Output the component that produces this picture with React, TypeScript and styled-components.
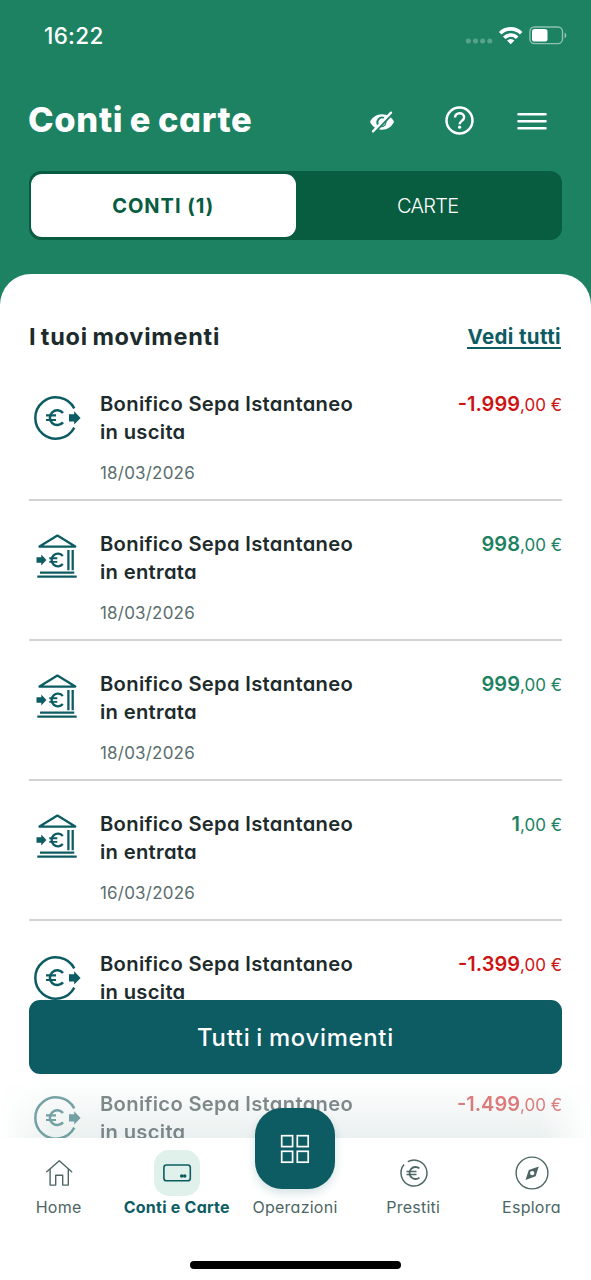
import React from "react";
import styled, { createGlobalStyle, css } from "styled-components";

const color = {
  green: "#1c8262",
  darkGreen: "#085c40",
  teal: "#0e5c63",
  ink: "#1d2b2c",
  muted: "#5a6e6d",
  nav: "#4d6664",
  red: "#cc1414",
  line: "#d3d3d3",
};

const GlobalStyle = createGlobalStyle`
  * { box-sizing: border-box; }
  body {
    margin: 0;
    background: #fff;
    font-family: Inter, "Open Sans", sans-serif;
    font-feature-settings: "cv11" 1;
    -webkit-font-smoothing: antialiased;
  }
  button { font: inherit; font-feature-settings: inherit; border: 0; padding: 0; background: none; color: inherit; }
  svg { display: block; flex: none; overflow: visible; }
`;

const Screen = styled.div`
  position: relative;
  width: 591px;
  height: 1280px;
  overflow: hidden;
  background: ${color.green};
  white-space: nowrap;
`;

const StatusBar = styled.div`
  display: flex;
  align-items: center;
  height: 70px;
  padding: 0 24px 0 44px;
  color: #fff;
`;

const Clock = styled.span`
  flex: 1;
  font-size: 22.5px;
  font-weight: 500;
  letter-spacing: 0.3px;
`;

const Header = styled.header`
  display: flex;
  align-items: center;
  height: 101px;
  padding: 0 44px 0 28px;
  color: #fff;
`;

const Title = styled.h1`
  flex: 1;
  margin: 0;
  padding-bottom: 1px;
  font-size: 34.5px;
  line-height: 40px;
  font-weight: 800;
  letter-spacing: 0.65px;
  word-spacing: -1.5px;
`;

const HeaderIcons = styled.div`
  display: flex;
  align-items: center;
  gap: 43px;
  & > :first-child { margin-right: 7px; }
`;

const Tabs = styled.div`
  display: flex;
  height: 69px;
  margin: 0 29px 34px;
  padding: 3px 2px;
  border-radius: 12px;
  background: ${color.darkGreen};
`;

const Tab = styled.button<{ $active?: boolean }>`
  flex: 1;
  border-radius: 11px;
  font-size: 20px;
  font-weight: 350;
  letter-spacing: -0.7px;
  color: #fff;
  ${(p) =>
    p.$active &&
    css`
      background: #fff;
      color: ${color.darkGreen};
      font-weight: 700;
      letter-spacing: 1px;
    `}
`;

const Sheet = styled.main`
  height: 1006px;
  padding: 42px 29px 0;
  border-radius: 31px 31px 0 0;
  background: #fff;
  color: ${color.ink};
`;

const SheetHead = styled.div`
  display: flex;
  align-items: center;
  justify-content: space-between;
  height: 40px;
  margin-bottom: 5px;
`;

const SheetTitle = styled.h2`
  margin: 0;
  font-size: 23.5px;
  font-weight: 700;
  letter-spacing: 0.75px;
  word-spacing: -1.8px;
`;

const AllLink = styled.a`
  height: 25px;
  margin-right: 1px;
  line-height: 26px;
  border-bottom: 2px solid ${color.teal};
  color: ${color.teal};
  font-size: 20.5px;
  font-weight: 700;
  letter-spacing: 0.38px;
`;

const Row = styled.article<{ $faded?: boolean }>`
  display: flex;
  height: 140px;
  padding-top: 27px;
  border-bottom: 2px solid ${color.line};
  opacity: ${(p) => (p.$faded ? 0.55 : 1)};
`;

const RowIcon = styled.div`
  width: 71px;
`;

const RowBody = styled.div`
  flex: 1;
  padding-top: 2px;
`;

const RowTitle = styled.div`
  font-size: 20.2px;
  line-height: 28px;
  font-weight: 600;
  letter-spacing: 0.31px;
`;

const RowDate = styled.div`
  margin-top: 15px;
  color: ${color.muted};
  font-size: 17px;
  line-height: 25px;
  letter-spacing: 0.2px;
`;

const Amount = styled.div<{ $out: boolean }>`
  padding-top: 2px;
  color: ${(p) => (p.$out ? color.red : color.green)};
  font-size: 17px;
  line-height: 28.5px;
  strong {
    font-size: 20px;
    font-weight: 600;
  }
`;

const AllButton = styled.button`
  position: absolute;
  left: 29px;
  right: 29px;
  top: 1000px;
  height: 74px;
  padding-top: 1px;
  border-radius: 11px;
  background: ${color.teal};
  color: #fff;
  font-size: 23.8px;
  font-weight: 500;
  letter-spacing: 0.75px;
  word-spacing: -1.2px;
`;

const NavFade = styled.div`
  position: absolute;
  left: 0;
  right: 0;
  top: 1080px;
  height: 59px;
  background: linear-gradient(rgba(20, 90, 80, 0), rgba(20, 90, 80, 0.09));
  mask-image: linear-gradient(90deg, transparent, #000 50px, #000 541px, transparent);
`;

const NavBar = styled.nav`
  position: absolute;
  left: 0;
  right: 0;
  bottom: 0;
  height: 142px;
  background: #fff;
  color: ${color.nav};
`;

const NavItems = styled.div`
  display: grid;
  grid-template-columns: repeat(5, 1fr);
  padding-top: 12px;
`;

const NavItem = styled.div<{ $active?: boolean }>`
  display: flex;
  flex-direction: column;
  align-items: center;
  font-size: 16px;
  line-height: 22px;
  letter-spacing: 0.25px;
  font-weight: ${(p) => (p.$active ? 700 : 400)};
  color: ${(p) => (p.$active ? color.teal : "inherit")};
`;

const NavLabel = styled.span`
  margin-right: 1px;
`;

const NavGlyph = styled.div<{ $active?: boolean }>`
  display: grid;
  place-items: center;
  width: 46px;
  height: 46px;
  border-radius: 15px;
  background: ${(p) => (p.$active ? "#e0f1eb" : "transparent")};
`;

const HomeIndicator = styled.div`
  width: 211px;
  height: 8px;
  margin: 43px auto 0;
  border-radius: 4px;
  background: #000;
`;

const Fab = styled.button`
  position: absolute;
  left: 255px;
  top: 1108px;
  display: grid;
  place-items: center;
  width: 80px;
  height: 81px;
  border-radius: 27px;
  background: ${color.teal};
  box-shadow: 0 4px 10px rgba(14, 92, 99, 0.18);
`;

const StatusIcons = () => (
  <svg width="101" height="20" viewBox="466 25 101 20" fill="#fff">
    {[468.3, 475.5, 482.6, 489.8].map((x) => (
      <circle key={x} cx={x} cy="41" r="2.5" opacity=".27" />
    ))}
    <g fill="none" stroke="#fff" strokeWidth="3.6">
      <path d="M500.2 33.2a15 15 0 0 1 21 0" />
      <path d="M504.2 37.7a9.3 9.3 0 0 1 13 0" />
    </g>
    <path d="M507 40.6a5.3 5.3 0 0 1 7.4 0l-3.7 3.6z" />
    <rect x="529.9" y="27" width="32.6" height="16.6" rx="4.6" fill="none" stroke="#fff" strokeOpacity=".5" strokeWidth="1.4" />
    <rect x="532" y="29" width="15.5" height="12.6" rx="2.6" />
    <path d="M564.6 32.4c2.2.8 2.2 5 0 5.8z" opacity=".55" />
  </svg>
);

const HideIcon = () => (
  <svg width="26" height="24" viewBox="0 0 26 24">
    <path d="M1 13C3 8.500 7.500 5.300 13 5.300S23 8.500 25 13c-2.200 4.500-6.500 7.700-12 7.700S3.200 17.500 1 13z" fill="#fff" />
    <path d="M9.300 16.200A4.800 4.800 0 0 1 15 8.900" fill="none" stroke={color.green} strokeWidth="1.800" />
    <path d="M16.700 10.800a4.800 4.800 0 0 1-5.400 6.700" fill="none" stroke={color.green} strokeWidth="1.200" />
    <path d="M5.300 23 22.800 5" stroke={color.green} strokeWidth="3.200" />
    <path d="M4 22.400 22 3.600" stroke="#fff" strokeWidth="2.300" strokeLinecap="round" />
  </svg>
);

const HelpIcon = () => (
  <svg width="29" height="29" viewBox="0 0 29 29" fill="none" stroke="#fff" strokeWidth="2.500">
    <circle cx="14.500" cy="14.500" r="13" />
    <path d="M10 11.600c0-2.700 2-4.400 4.600-4.400s4.500 1.700 4.500 4.100c0 3.500-4.500 3.600-4.500 7" />
    <circle cx="14.600" cy="21.200" r="1.600" fill="#fff" stroke="none" />
  </svg>
);

const MenuIcon = () => (
  <svg width="30" height="20" viewBox="0 0 30 20" stroke="#fff" strokeWidth="2.600" strokeLinecap="round">
    <path d="M1.500 3.300h27M1.500 10.300h27M1.500 17.200h27" />
  </svg>
);

const OutgoingIcon = () => (
  <svg width="56" height="56" viewBox="0 0 56 56" fill="none" stroke={color.teal} strokeWidth="2.500">
    <path d="M45.300 20.300a20.700 20.700 0 1 0 0 19.400" />
    <path d="M34 25a7.400 7.400 0 1 0 0 9.400" />
    <path d="M17 27.300h10M17 32h10" strokeWidth="2.200" />
    <path d="M40 26.200h5.200v-3l6.400 6.700-6.400 6.700v-3H40z" fill={color.teal} stroke="none" />
  </svg>
);

const IncomingIcon = () => (
  <svg width="56" height="56" viewBox="0 0 56 56" fill="none" stroke={color.teal} strokeWidth="2.300">
    <path d="M10.500 18.600h35.800L28.400 7.600z" strokeLinejoin="round" />
    <path d="M39.400 22v20.300M43.700 22v20.300" />
    <path d="M11 44.700h34.300M8.300 48.700h39.400" />
    <path d="M33.800 28a6.300 6.300 0 1 0 0 8" />
    <path d="M20.300 30.300h8M20.300 33.900h8" strokeWidth="1.900" />
    <path d="M7.500 29.200h4.800v-2.800l5.100 5.600-5.100 5.600v-2.800H7.500z" fill={color.teal} stroke="none" />
  </svg>
);

const HomeIcon = () => (
  <svg width="28" height="28" viewBox="0 0 28 28" fill="none" stroke="currentColor" strokeWidth="1.400" strokeLinejoin="round" strokeLinecap="round">
    <path d="M1.800 12.800 14.300 1.700l12.400 11.100" />
    <path d="M5.100 10.500v15.600h5.600v-9.800h7v9.800h5.600V10.500" />
  </svg>
);

const CardIcon = () => (
  <svg width="28" height="18" viewBox="0 0 28 18" fill="none" stroke="currentColor" strokeWidth="1.600">
    <rect x=".9" y="1" width="26.400" height="15.800" rx="2.600" />
    <g fill="currentColor" stroke="none">
      <circle cx="18.700" cy="12" r="1.800" />
      <circle cx="21.700" cy="12" r="1.800" />
    </g>
  </svg>
);

const LoanIcon = () => (
  <svg width="28" height="28" viewBox="0 0 28 28" fill="none" stroke="currentColor" strokeWidth="1.500">
    <path d="M7.800 2.600a13 13 0 1 1-3.700 3" />
    <path d="M19.400 9.400a6 6 0 1 0 0 9.200" strokeWidth="1.800" />
    <path d="M6.500 12.500h10M6.500 15.500h10" strokeWidth="1.600" />
  </svg>
);

const CompassIcon = () => (
  <svg width="34" height="34" viewBox="0 0 34 34" fill="none" stroke="currentColor" strokeWidth="1.400">
    <circle cx="17" cy="17" r="15.900" />
    <path
      d="M23.800 10.400 20.600 20.200l-10.100 3.700 3.300-9.900zM17.200 14.900a2.200 2.200 0 1 0 0 4.400 2.200 2.200 0 0 0 0-4.400z"
      fill="currentColor"
      fillRule="evenodd"
      stroke="none"
    />
  </svg>
);

const GridIcon = () => (
  <svg width="30" height="30" viewBox="0 0 30 30" fill="none" stroke="#fff" strokeWidth="1.700">
    <rect x="1.700" y="1.700" width="10.900" height="10.900" />
    <rect x="17.300" y="1.700" width="10.900" height="10.900" />
    <rect x="1.700" y="17.300" width="10.900" height="10.900" />
    <rect x="17.300" y="17.300" width="10.900" height="10.900" />
  </svg>
);

const movements = [
  { out: true, units: "-1.999", date: "18/03/2026" },
  { out: false, units: "998", date: "18/03/2026" },
  { out: false, units: "999", date: "18/03/2026" },
  { out: false, units: "1", date: "16/03/2026" },
  { out: true, units: "-1.399", date: "" },
  { out: true, units: "-1.499", date: "", faded: true },
];

const navItems = [
  { label: "Home", icon: <HomeIcon /> },
  { label: "Conti e Carte", icon: <CardIcon />, active: true },
  { label: "Operazioni", icon: null },
  { label: "Prestiti", icon: <LoanIcon /> },
  { label: "Esplora", icon: <CompassIcon /> },
];

export default function App() {
  return (
    <>
      <GlobalStyle />
      <Screen>
        <StatusBar>
          <Clock>16:22</Clock>
          <StatusIcons />
        </StatusBar>
        <Header>
          <Title>Conti e carte</Title>
          <HeaderIcons>
            <HideIcon />
            <HelpIcon />
            <MenuIcon />
          </HeaderIcons>
        </Header>
        <Tabs>
          <Tab $active>CONTI (1)</Tab>
          <Tab>CARTE</Tab>
        </Tabs>
        <Sheet>
          <SheetHead>
            <SheetTitle>I tuoi movimenti</SheetTitle>
            <AllLink>Vedi tutti</AllLink>
          </SheetHead>
          {movements.map((m) => (
            <Row key={m.units} $faded={m.faded}>
              <RowIcon>{m.out ? <OutgoingIcon /> : <IncomingIcon />}</RowIcon>
              <RowBody>
                <RowTitle>
                  Bonifico Sepa Istantaneo
                  <br />
                  {m.out ? "in uscita" : "in entrata"}
                </RowTitle>
                {m.date && <RowDate>{m.date}</RowDate>}
              </RowBody>
              <Amount $out={m.out}>
                <strong>{m.units}</strong>,00 €
              </Amount>
            </Row>
          ))}
        </Sheet>
        <AllButton>Tutti i movimenti</AllButton>
        <NavFade />
        <NavBar>
          <NavItems>
            {navItems.map((n) => (
              <NavItem key={n.label} $active={n.active}>
                <NavGlyph $active={n.active}>{n.icon}</NavGlyph>
                <NavLabel>{n.label}</NavLabel>
              </NavItem>
            ))}
          </NavItems>
          <HomeIndicator />
        </NavBar>
        <Fab>
          <GridIcon />
        </Fab>
      </Screen>
    </>
  );
}
